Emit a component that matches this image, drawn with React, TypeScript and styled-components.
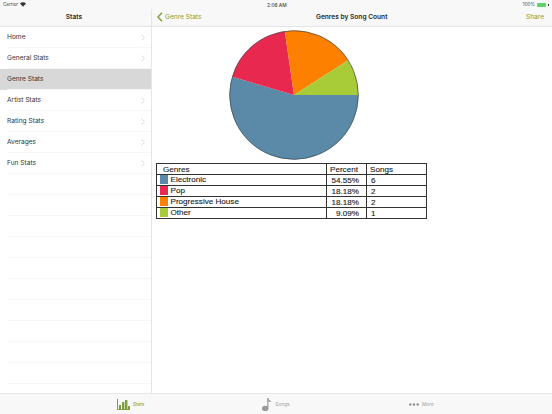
import React from 'react'
import styled, { createGlobalStyle } from 'styled-components'

const GlobalStyle = createGlobalStyle`
  html, body {
    margin: 0;
    padding: 0;
    background: #fff;
  }
  body {
    font-family: Inter, "Liberation Sans", sans-serif;
    color: #1f1f1f;
    overflow: hidden;
  }
`

const Screen = styled.div`
  width: 552px;
  height: 414px;
  display: flex;
  flex-direction: column;
  overflow: hidden;
`

const TopBar = styled.div`
  height: 26.5px;
  display: grid;
  grid-template-columns: 151px 1px 1fr;
  background: #f8f8f8;
  border-bottom: 1px solid #e4e4e4;
  box-sizing: border-box;
  flex-shrink: 0;
`

const TopDivider = styled.div`
  background: #e6e6e6;
  margin-top: 9px;
`

const TopPane = styled.div`
  display: flex;
  flex-direction: column;
  min-width: 0;
`

const StatusRow = styled.div`
  height: 9px;
  display: flex;
  align-items: center;
  padding: 0 3px;
  font-size: 4.6px;
  color: #444;
  gap: 2px;
`

const StatusClock = styled.span`
  flex: 1;
  text-align: left;
  padding-left: 112px;
  font-size: 4.8px;
  font-weight: 500;
`

const BatteryShell = styled.span`
  display: inline-block;
  width: 9px;
  height: 4px;
  background: #5fd365;
  border-radius: 1px;
`

const BatteryTip = styled.span`
  display: inline-block;
  width: 1px;
  height: 2px;
  background: #333;
`

const NavRow = styled.div<{ $center?: boolean }>`
  flex: 1;
  display: flex;
  align-items: center;
  justify-content: ${({ $center }) => ($center ? 'center' : 'space-between')};
  padding: 0 8px 0 5px;
  position: relative;
  font-size: 6.6px;
`

const NavTitle = styled.span`
  font-weight: 600;
  color: #2a2a2a;
`

const CenteredTitle = styled(NavTitle)`
  position: absolute;
  left: 164px;
`

const NavLink = styled.span`
  display: flex;
  align-items: center;
  gap: 2px;
  color: #7d9f3c;
  font-size: 6.6px;
`

const Body = styled.div`
  flex: 1;
  display: flex;
  min-height: 0;
`

const Sidebar = styled.div`
  width: 152px;
  flex-shrink: 0;
  box-sizing: border-box;
  border-right: 1px solid #e6e6e6;
  overflow: hidden;
`

const Row = styled.div<{ $selected?: boolean }>`
  height: 21px;
  box-sizing: border-box;
  display: flex;
  align-items: center;
  justify-content: space-between;
  padding: 0 6px 0 7px;
  font-size: 6.6px;
  color: #333;
  background: ${({ $selected }) => ($selected ? '#d8d8d8' : 'transparent')};
  position: relative;

  &::after {
    content: '';
    position: absolute;
    left: 7px;
    right: 0;
    bottom: 0;
    height: 1px;
    background: #f6f6f6;
  }
`

const Main = styled.div`
  flex: 1;
  display: flex;
  flex-direction: column;
  align-items: flex-start;
  padding: 3px 0 0 4px;
  min-width: 0;
`

const PieBox = styled.div`
  width: 270px;
  display: flex;
  justify-content: center;
  margin-bottom: 3px;
  padding-left: 5px;
  box-sizing: border-box;
`

const Legend = styled.table`
  width: 271px;
  border-collapse: collapse;
  table-layout: fixed;
  font-family: "Liberation Sans", Arial, sans-serif;
  font-size: 8.1px;
  color: #1a1a1a;
  -webkit-text-stroke: 0.12px #1a1a1a;
`

const Cell = styled.td<{ $right?: boolean }>`
  border: 1px solid #333;
  height: 10.75px;
  line-height: 9px;
  padding: 1px 3px 0 3px;
  box-sizing: border-box;
  text-align: ${({ $right }) => ($right ? 'right' : 'left')};
  padding-right: ${({ $right }) => ($right ? '7px' : '3px')};
  white-space: nowrap;
  overflow: hidden;
`

const HeadCell = styled(Cell).attrs({ as: 'th' })<{ $inset?: boolean }>`
  font-weight: 400;
  text-align: left;
  padding-left: ${({ $inset }) => ($inset ? '6px' : '3px')};
`

const SongsCell = styled(Cell)`
  padding-left: 4px;
`

const GenreCell = styled.span`
  display: flex;
  align-items: center;
  gap: 2.5px;
  margin-top: -1px;
`

const Swatch = styled.span<{ $color: string }>`
  width: 8px;
  height: 9px;
  background: ${({ $color }) => $color};
  flex-shrink: 0;
`

const TabBar = styled.div`
  height: 21px;
  flex-shrink: 0;
  box-sizing: border-box;
  background: #f8f8f8;
  border-top: 1px solid #e6e6e6;
  padding: 0 58px;
  display: grid;
  grid-template-columns: repeat(3, 1fr);
`

const Tab = styled.div<{ $active?: boolean }>`
  display: flex;
  align-items: center;
  justify-content: center;
  gap: 3px;
  font-size: 4.8px;
  color: ${({ $active }) => ($active ? '#7d9f3c' : '#a3a3a3')};
`

const genres = [
  { name: 'Electronic', percent: '54.55%', songs: 6, value: 6, color: '#5b8aa8' },
  { name: 'Pop', percent: '18.18%', songs: 2, value: 2, color: '#e8284f' },
  { name: 'Progressive House', percent: '18.18%', songs: 2, value: 2, color: '#fd8000' },
  { name: 'Other', percent: '9.09%', songs: 1, value: 1, color: '#a8cb38' }
]

const menu = ['Home', 'General Stats', 'Genre Stats', 'Artist Stats', 'Rating Stats', 'Averages', 'Fun Stats']

const Chevron = () => (
  <svg width="4" height="7" viewBox="0 0 4 7">
    <path d="M0.5 0.5 L3.5 3.5 L0.5 6.5" fill="none" stroke="#cfcfcf" strokeWidth="0.7" />
  </svg>
)

const BackChevron = () => (
  <svg width="6" height="10" viewBox="0 0 6 10">
    <path d="M5 0.8 L1 5 L5 9.2" fill="none" stroke="#7d9f3c" strokeWidth="1.4" />
  </svg>
)

const Wifi = () => (
  <svg width="6" height="5" viewBox="0 0 12 9">
    <path d="M6 9 L0 2.6 C3.4 -0.6 8.6 -0.6 12 2.6 Z" fill="#333" />
  </svg>
)

const Pie = () => {
  const r = 64.5
  const c = 65
  const total = genres.reduce((sum, g) => sum + g.value, 0)
  let angle = 0
  const point = (a: number) => `${c + r * Math.cos(a)} ${c + r * Math.sin(a)}`
  return (
    <svg width="130" height="130" viewBox="0 0 130 130">
      {genres.map(g => {
        const sweep = (g.value / total) * Math.PI * 2
        const d = `M${c} ${c} L${point(angle)} A${r} ${r} 0 ${sweep > Math.PI ? 1 : 0} 1 ${point(angle + sweep)} Z`
        angle += sweep
        return <path key={g.name} d={d} fill={g.color} />
      })}
      <circle cx={c} cy={c} r={r - 0.2} fill="none" stroke="#3f4a50" strokeWidth="0.7" />
    </svg>
  )
}

const BarsIcon = () => (
  <svg width="13" height="11" viewBox="0 0 13 11" fill="#7d9f3c">
    <rect x="0" y="0" width="1" height="11" />
    <rect x="0" y="10" width="13" height="1" />
    <rect x="2" y="6" width="2" height="4" />
    <rect x="5" y="3" width="2.4" height="7" />
    <rect x="8" y="1" width="2.4" height="9" />
    <rect x="11" y="7" width="2" height="3" />
  </svg>
)

const NoteIcon = () => (
  <svg width="10" height="13" viewBox="0 0 10 13" fill="#9a9a9a">
    <ellipse cx="3.2" cy="10.4" rx="3.2" ry="2.6" />
    <rect x="5.2" y="0" width="1.2" height="10.4" />
    <path d="M6 0 C6.5 2 9 2.6 9.6 4.6 C8.5 3.6 7 3.4 6 3.2 Z" />
  </svg>
)

const DotsIcon = () => (
  <svg width="10" height="3" viewBox="0 0 10 3" fill="#8f8f8f">
    <circle cx="1.3" cy="1.5" r="1.2" />
    <circle cx="5" cy="1.5" r="1.2" />
    <circle cx="8.7" cy="1.5" r="1.2" />
  </svg>
)

const App: React.FC = () => (
  <Screen>
    <GlobalStyle />
    <TopBar>
      <TopPane>
        <StatusRow>
          Carrier <Wifi />
        </StatusRow>
        <NavRow $center>
          <NavTitle>Stats</NavTitle>
        </NavRow>
      </TopPane>
      <TopDivider />
      <TopPane>
        <StatusRow>
          <StatusClock>2:06 AM</StatusClock>
          100% <BatteryShell /> <BatteryTip />
        </StatusRow>
        <NavRow>
          <NavLink>
            <BackChevron /> Genre Stats
          </NavLink>
          <CenteredTitle>Genres by Song Count</CenteredTitle>
          <NavLink>Share</NavLink>
        </NavRow>
      </TopPane>
    </TopBar>
    <Body>
      <Sidebar>
        {menu.map(item => (
          <Row key={item} $selected={item === 'Genre Stats'}>
            {item}
            {item !== 'Genre Stats' && <Chevron />}
          </Row>
        ))}
        {Array.from({ length: 11 }, (_, i) => (
          <Row key={i} />
        ))}
      </Sidebar>
      <Main>
        <PieBox>
          <Pie />
        </PieBox>
        <Legend>
          <colgroup>
            <col style={{ width: 170 }} />
            <col style={{ width: 40 }} />
            <col />
          </colgroup>
          <thead>
            <tr>
              <HeadCell $inset>Genres</HeadCell>
              <HeadCell>Percent</HeadCell>
              <HeadCell>Songs</HeadCell>
            </tr>
          </thead>
          <tbody>
            {genres.map(g => (
              <tr key={g.name}>
                <Cell>
                  <GenreCell>
                    <Swatch $color={g.color} />
                    {g.name}
                  </GenreCell>
                </Cell>
                <Cell $right>{g.percent}</Cell>
                <SongsCell>{g.songs}</SongsCell>
              </tr>
            ))}
          </tbody>
        </Legend>
      </Main>
    </Body>
    <TabBar>
      <Tab $active>
        <BarsIcon /> Stats
      </Tab>
      <Tab>
        <NoteIcon /> Songs
      </Tab>
      <Tab>
        <DotsIcon /> More
      </Tab>
    </TabBar>
  </Screen>
)

export default App
